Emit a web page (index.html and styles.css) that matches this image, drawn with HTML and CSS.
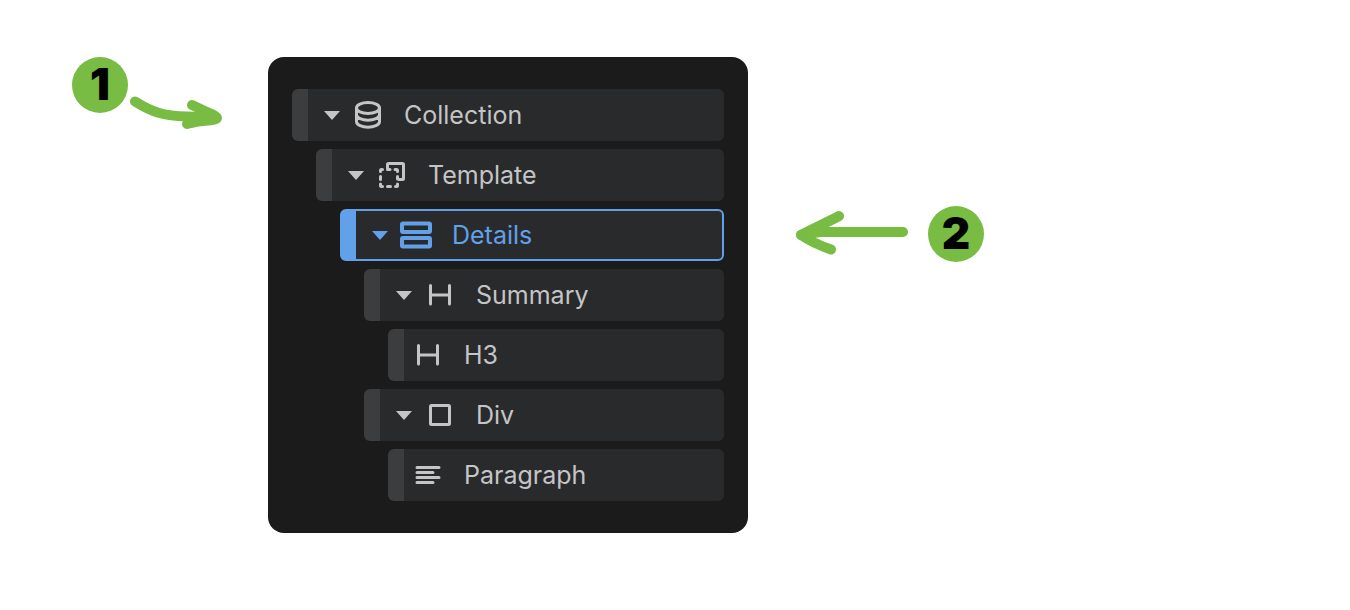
FILE: index.html
```html
<!DOCTYPE html>
<html lang="en">
<head>
    <meta charset="UTF-8">
    <meta name="viewport" content="width=device-width, initial-scale=1.0">
    <title>Structure</title>
    <link rel="stylesheet" href="styles.css">
</head>
<body>
    <main class="guide">
        <div class="callout">
            <span class="badge">1</span>
            <svg class="arrow" width="94" height="80" viewBox="0 0 94 80" aria-hidden="true">
                <path d="M7 44.500C24 55 35 59 59 59.500L88 60.500"/>
                <path d="M64 48L80 55.500Q98 62 80 63.500Q70 64 59 67"/>
                <path class="head" d="M70 53L86 60L72 63Z"/>
            </svg>
        </div>

        <div class="panel">
            <ul class="tree">
                <li>
                    <div class="row">
                        <button class="toggle" type="button" aria-label="Collapse Collection"></button>
                        <svg class="icon" viewBox="0 0 48 32" aria-hidden="true">
                            <ellipse cx="24" cy="9" rx="11.5" ry="5.5"/>
                            <path d="M12.500 9V22.500C12.500 30 35.500 30 35.500 22.500V9M12.500 15.500C12.500 23 35.500 23 35.500 15.500"/>
                        </svg>
                        <span class="label">Collection</span>
                    </div>
                    <ul>
                        <li>
                            <div class="row">
                                <button class="toggle" type="button" aria-label="Collapse Template"></button>
                                <svg class="icon" viewBox="0 0 48 32" aria-hidden="true">
                                    <path d="M19.500 9V5.500Q19.500 4.500 20.500 4.500H34.500Q35.500 4.500 35.500 5.500V19.500Q35.500 20.500 34.500 20.500H31"/>
                                    <path d="M12.500 12.500V11.500Q12.500 10.500 13.500 10.500H14.500M19.500 10.500H22M27 10.500H28.500Q29.500 10.500 29.500 11.500V12.500M29.500 17.500V20M29.500 25V26.500Q29.500 27.500 28.500 27.500H27.500M22.500 27.500H19.500M14.500 27.500H13.500Q12.500 27.500 12.500 26.500V25M12.500 20.500V17.500"/>
                                </svg>
                                <span class="label">Template</span>
                            </div>
                            <ul>
                                <li>
                                    <div class="row selected">
                                        <button class="toggle" type="button" aria-label="Collapse Details"></button>
                                        <svg class="icon bold" viewBox="0 0 48 32" aria-hidden="true">
                                            <rect x="10" y="4.500" width="28" height="8.500" rx="1"/>
                                            <rect x="10" y="19" width="28" height="8.500" rx="1"/>
                                        </svg>
                                        <span class="label">Details</span>
                                    </div>
                                    <ul>
                                        <li>
                                            <div class="row">
                                                <button class="toggle" type="button" aria-label="Collapse Summary"></button>
                                                <svg class="icon" viewBox="0 0 48 32" aria-hidden="true">
                                                    <path d="M14.500 6.500V25M33.500 6.500V25M14.500 16H33.500"/>
                                                </svg>
                                                <span class="label">Summary</span>
                                            </div>
                                            <ul>
                                                <li>
                                                    <div class="row">
                                                        <svg class="icon" viewBox="0 0 48 32" aria-hidden="true">
                                                            <path d="M14.500 6.500V25M33.500 6.500V25M14.500 16H33.500"/>
                                                        </svg>
                                                        <span class="label">H3</span>
                                                    </div>
                                                </li>
                                            </ul>
                                        </li>
                                        <li>
                                            <div class="row">
                                                <button class="toggle" type="button" aria-label="Collapse Div"></button>
                                                <svg class="icon" viewBox="0 0 48 32" aria-hidden="true">
                                                    <rect x="14.500" y="6.500" width="19" height="19" rx="1"/>
                                                </svg>
                                                <span class="label">Div</span>
                                            </div>
                                            <ul>
                                                <li>
                                                    <div class="row">
                                                        <svg class="icon" viewBox="0 0 48 32" aria-hidden="true">
                                                            <path d="M13 8.500H35M13 13.500H29M13 18.500H35M13 23.500H29"/>
                                                        </svg>
                                                        <span class="label">Paragraph</span>
                                                    </div>
                                                </li>
                                            </ul>
                                        </li>
                                    </ul>
                                </li>
                            </ul>
                        </li>
                    </ul>
                </li>
            </ul>
        </div>

        <div class="callout callout-details">
            <svg class="arrow" width="134" height="56" viewBox="0 0 134 56" aria-hidden="true">
                <path d="M109 26H26L7 29"/>
                <path d="M45 10C34 16 20 22 7 29C17 36 27 40 37 43.500"/>
            </svg>
            <span class="badge">2</span>
        </div>
    </main>
</body>
</html>
```
FILE: styles.css
```css
* {
    box-sizing: border-box;
}

body {
    margin: 0;
    background: #fff;
    color: #c4c5c6;
    font-family: Inter, "Liberation Sans", sans-serif;
}

.guide {
    display: flex;
    align-items: flex-start;
    gap: 46px;
    padding: 57px 72px;
}

/* numbered callouts */
.callout {
    display: flex;
    flex: none;
}

.callout-details {
    margin-top: 149px;
}

.badge {
    width: 56px;
    height: 56px;
    border-radius: 50%;
    background: #78bc43;
    color: #000;
    font-size: 44px;
    font-weight: 900;
    line-height: 55px;
    text-align: center;
}

.arrow {
    fill: none;
    stroke: #78bc43;
    stroke-width: 10;
    stroke-linecap: round;
    stroke-linejoin: round;
}

.arrow .head {
    fill: #78bc43;
    stroke: none;
}

/* structure panel */
.panel {
    flex: 0 1 480px;
    padding: 32px 24px;
    border-radius: 16px;
    background: #1b1b1b;
}

ul {
    margin: 0;
    padding: 0;
    list-style: none;
}

li ul {
    padding-left: 24px;
}

li li,
li + li {
    margin-top: 8px;
}

.row {
    display: flex;
    align-items: center;
    height: 52px;
    border-left: 16px solid #3c3d3f;
    border-radius: 6px;
    background: #292a2c;
}

.toggle {
    display: flex;
    justify-content: center;
    width: 24px;
    margin-left: 12px;
    padding: 0;
    border: 0;
    background: none;
    color: inherit;
}

.toggle::before {
    content: "";
    border: 8px solid transparent;
    border-top: 9px solid currentColor;
    border-bottom: 0;
}

.icon {
    width: 48px;
    height: 32px;
    fill: none;
    stroke: currentColor;
    stroke-width: 3;
    stroke-linecap: round;
    stroke-linejoin: round;
}

.icon.bold {
    stroke-width: 4;
}

.label {
    margin-left: 12px;
    font-size: 25px;
    font-weight: 400;
    line-height: 32px;
}

.selected {
    border: 2px solid #62a0ea;
    border-left-width: 16px;
    color: #62a0ea;
}
```
